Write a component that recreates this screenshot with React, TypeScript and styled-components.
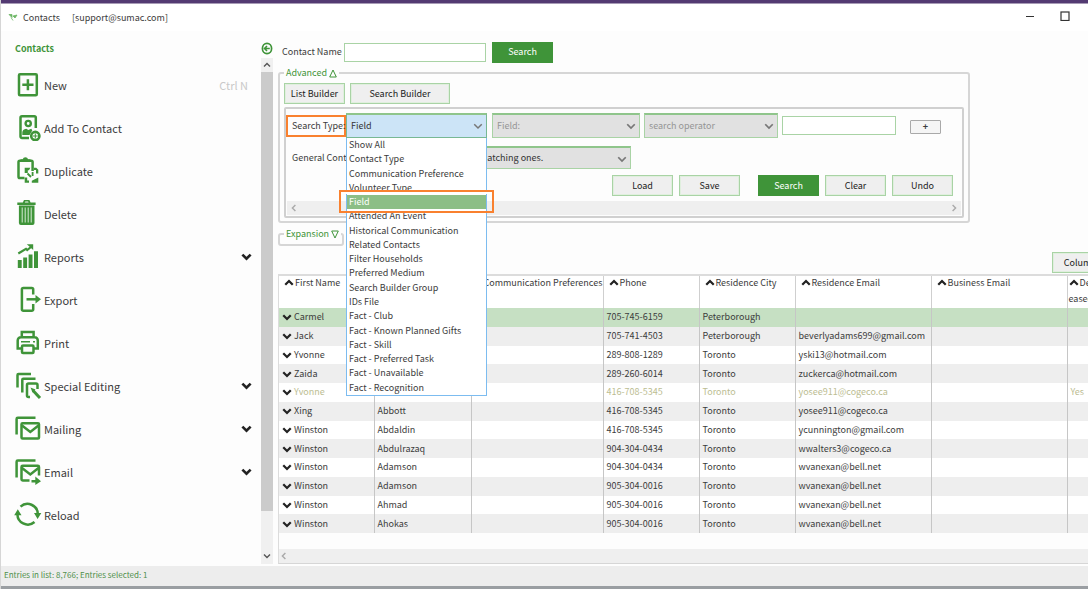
import React from "react";
import styled, { createGlobalStyle, css } from "styled-components";

const green = "#3f9439";
const paleGreen = "#a9d3a5";
const orange = "#f9812f";

const GlobalStyle = createGlobalStyle`
  *, *::before, *::after { box-sizing: border-box; }
  body { margin: 0; overflow: hidden; background: #fdfdfd; }
  body, button, input, select, table {
    font-family: "Noto Sans CJK SC", "Noto Sans", sans-serif;
    font-size: 9px;
    line-height: 14px;
    color: #3c3c3c;
  }
  button, input, select { margin: 0; padding: 0; border-radius: 0; }
`;

const Page = styled.div`
  min-height: 100vh;
  overflow: hidden;
`;
const AppWindow = styled.div`
  display: flex;
  flex-direction: column;
  width: calc(100% + 32px);
  min-height: 100vh;
  border-left: 1px solid #d6d6d6;
`;
const TopEdge = styled.div`
  height: 4px;
  background: #533a72;
  border-bottom: 1px solid #a79bb6;
`;
const TitleBar = styled.header`
  display: flex;
  align-items: center;
  height: 27px;
  padding: 0 3px 0 7px;
  background: #fff;
`;
const TitleName = styled.span`
  margin-left: 5px;
`;
const TitleUser = styled.span`
  margin-left: 12px;
  flex: 1;
`;
const WindowButton = styled.button`
  display: flex;
  align-items: center;
  justify-content: center;
  width: 35px;
  height: 24px;
  margin-bottom: 3px;
  border: 0;
  background: transparent;
`;
const Body = styled.div`
  display: flex;
  flex: 1;
`;
const Sidebar = styled.aside`
  display: flex;
  width: 272px;
  flex: none;
`;
const SideMain = styled.div`
  flex: 1;
`;
const SideTitle = styled.h2`
  margin: 0;
  padding: 11px 0 7px 14px;
  font-size: 9px;
  line-height: 14px;
  font-weight: 700;
  color: ${green};
`;
const Menu = styled.nav`
  display: flex;
  flex-direction: column;
`;
const MenuItem = styled.button`
  display: flex;
  align-items: center;
  height: 43px;
  padding: 0 9px 0 13px;
  border: 0;
  background: transparent;
  font-size: 11px;
  text-align: left;
`;
const MenuIcon = styled.svg`
  width: 28px;
  height: 28px;
  margin-bottom: 1px;
  flex: none;
`;
const MenuLabel = styled.span`
  flex: 1;
  margin-left: 2px;
`;
const Shortcut = styled.span`
  color: #c9c9c9;
  margin-right: 4px;
`;
const SideRail = styled.div`
  display: flex;
  flex-direction: column;
  align-items: center;
  width: 12px;
  padding: 11px 0 2px;
`;
const CollapseButton = styled.button`
  display: flex;
  border: 0;
  background: transparent;
`;
const VTrack = styled.div`
  display: flex;
  flex-direction: column;
  align-items: center;
  flex: 1;
  width: 12px;
  margin-top: 3px;
  padding: 3px 0 4px;
  background: #f0f0f0;
`;
const VThumb = styled.div`
  width: 12px;
  flex: 1;
  margin: 3px 0 41px;
  background: #cbcbcb;
`;
const Main = styled.main`
  display: flex;
  flex-direction: column;
  flex: 1;
  min-width: 0;
  padding: 11px 0 2px 5px;
`;
const SearchRow = styled.form`
  display: flex;
  align-items: center;
  height: 20px;
  padding-left: 4px;
`;
const TextBox = styled.input<{ $w: number }>`
  width: ${(p) => p.$w}px;
  height: 19px;
  border: 1px solid ${paleGreen};
  background: #fff;
`;
const Button = styled.button<{ $w?: number; $primary?: boolean }>`
  width: ${(p) => p.$w ?? 61}px;
  height: 21px;
  flex: none;
  border: 1px solid ${(p) => (p.$primary ? green : paleGreen)};
  outline: 1px solid ${(p) => (p.$primary ? "transparent" : "#e0efde")};
  outline-offset: -2px;
  background: ${(p) => (p.$primary ? green : "#efefef")};
  color: ${(p) => (p.$primary ? "#fff" : "#222")};
`;
const SearchGap = styled.div`
  width: 6px;
`;
const ContactLabel = styled.label`
  width: 62px;
`;
const Group = styled.fieldset`
  width: 692px;
  min-width: 0;
  margin: 4px 0 0;
  padding: 3px 4px;
  border: 2px solid #d6d6d6;
  border-radius: 3px;
`;
const SmallGroup = styled.fieldset`
  width: 66px;
  min-width: 0;
  height: 19px;
  margin: 4px 0 0;
  padding: 0;
  border: 2px solid #d6d6d6;
  border-radius: 3px;
`;
const Legend = styled.legend<{ $inset: number }>`
  margin-left: ${(p) => p.$inset}px;
  padding: 0 2px;
`;
const LegendButton = styled.button`
  display: flex;
  align-items: center;
  gap: 2px;
  border: 0;
  background: transparent;
  color: ${green};
  white-space: nowrap;
`;
const BuilderRow = styled.div`
  display: flex;
  gap: 5px;
`;
const Criteria = styled.div`
  margin-top: 3px;
  padding: 4px 0 1px;
  border: 2px solid #d0d0d0;
  border-radius: 2px;
`;
const CriteriaRow = styled.div`
  display: flex;
  align-items: center;
  height: 25px;
`;
const GeneralRow = styled.div`
  display: flex;
  align-items: center;
  height: 23px;
  margin-top: 8px;
`;
const TypeLabel = styled.label`
  width: 60px;
  height: 22px;
  padding-left: 4px;
  border: 2px solid ${orange};
  line-height: 18px;
  white-space: nowrap;
`;
const GeneralLabel = styled.label`
  width: 60px;
  padding-left: 6px;
  white-space: nowrap;
`;
const SelectWrap = styled.div<{ $w: number; $ml: number }>`
  position: relative;
  display: flex;
  align-items: center;
  width: ${(p) => p.$w}px;
  margin-left: ${(p) => p.$ml}px;
  flex: none;
`;
const Select = styled.select<{ $open?: boolean; $muted?: boolean; $indent?: number }>`
  appearance: none;
  width: 100%;
  height: ${(p) => (p.$indent ? 23 : 25)}px;
  padding-left: ${(p) => p.$indent ?? 4}px;
  border: 1px solid ${(p) => (p.$open ? "#78b894" : paleGreen)};
  border-top: 2px solid #8fc58b;
  background: ${(p) => (p.$open ? "#cce4f7" : "#e1e1e1")};
  color: ${(p) => (p.$muted ? "#959595" : "#333")};
  opacity: 1;
`;
const SelectArrow = styled.span`
  position: absolute;
  right: 4px;
  top: 8px;
  display: flex;
  pointer-events: none;
`;
const Options = styled.ul`
  position: absolute;
  z-index: 5;
  top: 100%;
  left: 0;
  display: grid;
  grid-auto-rows: 1fr;
  width: 141px;
  height: 258px;
  margin: 0;
  padding: 0;
  list-style: none;
  border: 1px solid #7cbcf0;
  border-top: 0;
  background: #fff;
  white-space: nowrap;
`;
const Option = styled.li<{ $selected: boolean }>`
  padding-left: 2px;
  min-height: 0;
  ${(p) =>
    p.$selected &&
    css`
      position: relative;
      background: #8cbe86;
      color: #fff;
      &::after {
        content: "";
        position: absolute;
        inset: -5px -8px -4px;
        border: 2px solid ${orange};
        box-shadow: inset 0 2px #fff;
      }
    `}
`;
const AddButton = styled.button`
  width: 31px;
  height: 14px;
  margin: 2px 0 0 14px;
  border: 1px solid #a9a9a9;
  border-radius: 1px;
  background: #f5f5f5;
  font-weight: 700;
  line-height: 10px;
`;
const ActionRow = styled.div`
  display: flex;
  justify-content: flex-end;
  gap: 6px;
  margin: 6px 9px 5px 0;
`;
const HTrack = styled.div`
  display: flex;
  align-items: center;
  justify-content: space-between;
  height: 14px;
  margin: 0 1px;
  padding: 0 3px;
  background: #efefef;
`;
const GridTrack = styled(HTrack)`
  margin: 0;
  padding: 0 0 0 1px;
`;
const ColumnsRow = styled.div`
  display: flex;
  justify-content: flex-end;
  padding: 6px 7px 1px 0;
`;
const Grid = styled.div`
  display: flex;
  flex-direction: column;
  flex: 1;
  border-left: 1px solid #dcdcdc;
  border-top: 2px solid #dcdcdc;
  border-bottom: 1px solid #d6d6d6;
`;
const TableArea = styled.div`
  flex: 1;
`;
const Table = styled.table`
  width: 100%;
  height: 257px;
  table-layout: fixed;
  border-collapse: collapse;
`;
const HeadCell = styled.th`
  height: 32px;
  padding: 0 0 0 5px;
  border-right: 1px solid #cfcfcf;
  background: #fff;
  font-weight: 400;
  text-align: left;
  vertical-align: top;
  white-space: nowrap;
  overflow: hidden;
  &:nth-child(3) { padding-left: 12px; }
  &:last-child { padding-left: 1px; }
`;
const Sort = styled.span`
  display: inline-flex;
  align-items: center;
  gap: 1px;
`;
const Row = styled.tr<{ $tone: "selected" | "even" | "odd"; $faded: boolean }>`
  background: ${(p) => ({ selected: "#c6e0c3", even: "#eeeeee", odd: "#ffffff" })[p.$tone]};
  color: ${(p) => (p.$faded ? "#bcbd92" : "#3c3c3c")};
`;
const Cell = styled.td`
  padding: 0 0 0 3px;
  border-right: 1px solid #c6c6c6;
  white-space: nowrap;
  overflow: hidden;
`;
const NameCell = styled.span`
  display: flex;
  align-items: center;
  gap: 2px;
`;
const StatusBar = styled.footer`
  height: 20px;
  padding: 2px 3px 0;
  background: #ededed;
  color: #4f8f4a;
  font-size: 8px;
`;
const BottomEdge = styled.div`
  height: 3px;
  background: #9a9ea2;
`;

type Dir = "up" | "down" | "left" | "right";
const turns: Record<Dir, number> = { down: 0, up: 180, left: 90, right: 270 };

function Chevron({ dir, color = "#777", weight = 1.4, size = 8 }: { dir: Dir; color?: string; weight?: number; size?: number }) {
  return (
    <svg width={size} height={size} viewBox="0 0 8 8" aria-hidden="true">
      <path d="M1 2.6 4 5.6 7 2.6" transform={`rotate(${turns[dir]} 4 4)`} fill="none" stroke={color} strokeWidth={weight} />
    </svg>
  );
}

const stroke = { fill: "none", stroke: green, strokeWidth: 2.5 };
const icons: Record<string, React.ReactNode> = {
  New: (
    <g {...stroke}>
      <rect x="5" y="4.3" width="17.8" height="21" rx="1" />
      <path d="M13.900 9.300v11M8.300 14.800h11.200" />
    </g>
  ),
  "Add To Contact": (
    <g>
      <path d="M21.800 15V4.800a1.500 1.500 0 0 0-1.500-1.500H8a1.500 1.500 0 0 0-1.500 1.500V23.500a1.500 1.500 0 0 0 1.500 1.500H15" {...stroke} />
      <circle cx="14.200" cy="10.500" r="2.600" {...stroke} strokeWidth="2.400" />
      <path d="M8.300 22v-2.500q0-3 4-3.800l2 1.300 3-1.300 1 1.800L15.500 22z" fill={green} />
      <circle cx="21.300" cy="23" r="4.100" fill="#fff" stroke={green} strokeWidth="2.600" />
      <path d="M21.300 20.500v5M18.800 23h5" {...stroke} strokeWidth="1" />
    </g>
  ),
  Duplicate: (
    <g>
      <path d="M10.500 22H5.800a1.300 1.300 0 0 1-1.300-1.300V6a1.300 1.300 0 0 1 1.300-1.300h11.500A1.300 1.300 0 0 1 18.600 6v9" {...stroke} />
      <path d="M6.500 6V3.300h2.200a2.800 2.800 0 0 1 5.400 0h2.400V6z" fill={green} />
      <path d="M10.700 17v-5.200h5.600L15 14.300h-1.200V17zM18.500 11.800h1.500v2.200h2v3.500h2.300v-3.700l-2-2zM10.700 21.500h2.500v3H15v2.300h-4.300zM24.300 21.500v5.300h-6.500v-2z" fill={green} />
      <path d="M13.500 17.500 17 21M18.600 16v4" {...stroke} strokeWidth="1.800" />
    </g>
  ),
  Delete: (
    <g fill={green}>
      <path d="M8.800 3.500 10 1h5.400l1.200 2.500h5v2.500H3.300V3.500zm2 0h3.800l-.5-1h-2.800z" />
      <path d="M4.900 6.600h15.600V24a2 2 0 0 1-2 2H6.900a2 2 0 0 1-2-2z" />
      <path d="M8.200 8.500v15M11.200 8.500v15M14.200 8.500v15M17.200 8.500v15" stroke="#d6ead4" strokeWidth="1" />
    </g>
  ),
  Reports: (
    <g fill={green}>
      <path d="M3.800 18h3.900v8H3.800zM9.200 15.500h3.900V26H9.200zM14.600 12.500h3.900V26h-3.900zM20 9.300h4V26h-4z" />
      <path d="M4.300 11.500 12 6.800l1.200 1.200L17 5" {...stroke} strokeWidth="2.200" />
      <path d="M12.800 2.200h6.400V8z" />
    </g>
  ),
  Export: (
    <g>
      <path d="M19.200 9.500V4.300a1.400 1.400 0 0 0-1.400-1.400H9.300a1.400 1.400 0 0 0-1.400 1.400v20.100a1.400 1.400 0 0 0 1.400 1.400h8.500a1.400 1.400 0 0 0 1.400-1.400V19" {...stroke} />
      <path d="M12.500 14.300H23" {...stroke} />
      <path d="M21.500 10 27 14.300 21.500 18.600z" fill={green} />
    </g>
  ),
  Print: (
    <g {...stroke}>
      <path d="M7.800 9V4h11.800v5M7.500 20.500H3.700v-8A3.200 3.200 0 0 1 6.900 9.300h13.700a3.200 3.200 0 0 1 3.200 3.200v8H20" />
      <rect x="8" y="17.500" width="11.500" height="7.500" rx="1" />
      <path d="M7 13.700h9M19 13.700h2" strokeWidth="1.600" />
    </g>
  ),
  "Special Editing": (
    <g {...stroke}>
      <path d="M3.500 16.500V4a1 1 0 0 1 1-1H17M8.300 21.500V8.700a1 1 0 0 1 1-1h12.200M16 26h-1.500a1.500 1.500 0 0 1-1.500-1.500V14a1.500 1.500 0 0 1 1.500-1.500h7.500a1.500 1.500 0 0 1 1.500 1.500V18" />
      <path d="M19 19.500 26 27" strokeWidth="3" />
      <path d="M16.500 16.500 21.500 18.500 18.500 21.500z" fill={green} strokeWidth="0" />
    </g>
  ),
  Mailing: (
    <g {...stroke}>
      <path d="M2.600 20.500V4.900a1.200 1.200 0 0 1 1.200-1.200H21.500" />
      <rect x="7.500" y="9.300" width="17.500" height="15.200" rx="1" />
      <path d="M8 11.500 16.300 18l8.200-6.500" />
    </g>
  ),
  Email: (
    <g>
      <path d="M2.600 20.500V4.700a1.200 1.200 0 0 1 1.200-1.200H21.500M15.500 23.500H8.700A1.200 1.200 0 0 1 7.500 22.300V10a1.200 1.200 0 0 1 1.200-1.200h15.100A1.200 1.200 0 0 1 25 10V18.500M8 11 16.300 17.500l8.200-6.500M17.500 24.300h5" {...stroke} />
      <path d="M21.300 19.600 27 24.300 21.300 28z" fill={green} />
    </g>
  ),
  Reload: (
    <g>
      <path d="M6.500 6.700A10.300 10.300 0 0 1 23.800 14M3.500 13.500A10.300 10.300 0 0 0 20.500 22" {...stroke} />
      <path d="M20 13h7.300l-3.700 6zM.2 15.200h7.300L3.800 9.200z" fill={green} />
    </g>
  ),
};

const menu: { label: string; shortcut?: string; more?: boolean }[] = [
  { label: "New", shortcut: "Ctrl N" },
  { label: "Add To Contact" },
  { label: "Duplicate" },
  { label: "Delete" },
  { label: "Reports", more: true },
  { label: "Export" },
  { label: "Print" },
  { label: "Special Editing", more: true },
  { label: "Mailing", more: true },
  { label: "Email", more: true },
  { label: "Reload" },
];

const searchTypes = [
  "Show All", "Contact Type", "Communication Preference", "Volunteer Type", "Field", "Attended An Event",
  "Historical Communication", "Related Contacts", "Filter Households", "Preferred Medium", "Search Builder Group",
  "IDs File", "Fact - Club", "Fact - Known Planned Gifts", "Fact - Skill", "Fact - Preferred Task",
  "Fact - Unavailable", "Fact - Recognition",
];

const columns = [
  { title: "First Name", width: 95 },
  { title: "", width: 97 },
  { title: "Communication Preferences", width: 132 },
  { title: "Phone", width: 96 },
  { title: "Residence City", width: 96 },
  { title: "Residence Email", width: 136 },
  { title: "Business Email", width: 136 },
  { title: "Dec", width: 0 },
];

const contacts = [
  ["Carmel", "", "705-745-6159", "Peterborough", "", ""],
  ["Jack", "", "705-741-4503", "Peterborough", "beverlyadams699@gmail.com", ""],
  ["Yvonne", "", "289-808-1289", "Toronto", "yski13@hotmail.com", ""],
  ["Zaida", "", "289-260-6014", "Toronto", "zuckerca@hotmail.com", ""],
  ["Yvonne", "", "416-708-5345", "Toronto", "yosee911@cogeco.ca", "Yes"],
  ["Xing", "Abbott", "416-708-5345", "Toronto", "yosee911@cogeco.ca", ""],
  ["Winston", "Abdaldin", "416-708-5345", "Toronto", "ycunnington@gmail.com", ""],
  ["Winston", "Abdulrazaq", "904-304-0434", "Toronto", "wwalters3@cogeco.ca", ""],
  ["Winston", "Adamson", "904-304-0434", "Toronto", "wvanexan@bell.net", ""],
  ["Winston", "Adamson", "905-304-0016", "Toronto", "wvanexan@bell.net", ""],
  ["Winston", "Ahmad", "905-304-0016", "Toronto", "wvanexan@bell.net", ""],
  ["Winston", "Ahokas", "905-304-0016", "Toronto", "wvanexan@bell.net", ""],
];

function Triangle({ up }: { up?: boolean }) {
  return (
    <svg width="8" height="9" viewBox="0 0 8 9" aria-hidden="true">
      <path d={up ? "M4 1 7.300 8H.7z" : "M4 8 7.300 1H.7z"} fill="none" stroke={green} />
    </svg>
  );
}

export default function App() {
  return (
    <Page>
      <GlobalStyle />
      <AppWindow>
        <TopEdge />
        <TitleBar>
          <svg width="10" height="10" viewBox="0 0 10 10" aria-hidden="true">
            <path d="M1 1.500h3v3zM5 3l4-1-2 3zM3 4.500l2 3" fill="#6cb665" stroke="#6cb665" strokeWidth=".8" />
          </svg>
          <TitleName>Contacts</TitleName>
          <TitleUser>[support@sumac.com]</TitleUser>
          <WindowButton aria-label="Minimize">
            <svg width="10" height="10"><path d="M1 5.500h8" stroke="#333" /></svg>
          </WindowButton>
          <WindowButton aria-label="Maximize">
            <svg width="10" height="10"><rect x="1" y="1" width="8" height="8.500" fill="none" stroke="#333" strokeWidth="1.200" /></svg>
          </WindowButton>
          <WindowButton aria-label="Close">
            <svg width="10" height="10"><path d="M1 1l8 8M9 1 1 9" stroke="#333" /></svg>
          </WindowButton>
        </TitleBar>
        <Body>
          <Sidebar>
            <SideMain>
              <SideTitle>Contacts</SideTitle>
              <Menu>
                {menu.map((m) => (
                  <MenuItem key={m.label}>
                    <MenuIcon viewBox="0 0 28 28" aria-hidden="true">{icons[m.label]}</MenuIcon>
                    <MenuLabel>{m.label}</MenuLabel>
                    {m.shortcut && <Shortcut>{m.shortcut}</Shortcut>}
                    {m.more && <Chevron dir="down" color="#222" weight={1.9} size={11} />}
                  </MenuItem>
                ))}
              </Menu>
            </SideMain>
            <SideRail>
              <CollapseButton aria-label="Collapse menu">
                <svg width="12" height="13" viewBox="0 0 12 13">
                  <ellipse cx="6" cy="6.500" rx="4.600" ry="5.200" fill="none" stroke={green} strokeWidth="1.700" />
                  <path d="M8.800 6.500H4M6 4 3.500 6.500 6 9" fill="none" stroke={green} strokeWidth="1.600" />
                </svg>
              </CollapseButton>
              <VTrack>
                <Chevron dir="up" color="#555" />
                <VThumb />
                <Chevron dir="down" color="#555" />
              </VTrack>
            </SideRail>
          </Sidebar>
          <Main>
            <SearchRow onSubmit={(e) => e.preventDefault()}>
              <ContactLabel htmlFor="name">Contact Name</ContactLabel>
              <TextBox id="name" $w={142} />
              <SearchGap />
              <Button $primary>Search</Button>
            </SearchRow>
            <Group>
              <Legend $inset={0}>
                <LegendButton>Advanced <Triangle up /></LegendButton>
              </Legend>
              <BuilderRow>
                <Button>List Builder</Button>
                <Button $w={100}>Search Builder</Button>
              </BuilderRow>
              <Criteria>
                <CriteriaRow>
                  <TypeLabel htmlFor="type">Search Type:</TypeLabel>
                  <SelectWrap $w={141} $ml={0}>
                    <Select id="type" $open><option>Field</option></Select>
                    <SelectArrow><Chevron dir="down" weight={1.2} size={10} /></SelectArrow>
                    <Options role="listbox" aria-label="Search type">
                      {searchTypes.map((t) => (
                        <Option key={t} role="option" aria-selected={t === "Field"} $selected={t === "Field"}>{t}</Option>
                      ))}
                    </Options>
                  </SelectWrap>
                  <SelectWrap $w={148} $ml={5}>
                    <Select aria-label="Field" $muted disabled><option>Field:</option></Select>
                    <SelectArrow><Chevron dir="down" size={10} /></SelectArrow>
                  </SelectWrap>
                  <SelectWrap $w={134} $ml={4}>
                    <Select aria-label="Search operator" $muted disabled><option>search operator</option></Select>
                    <SelectArrow><Chevron dir="down" size={10} /></SelectArrow>
                  </SelectWrap>
                  <SelectWrap $w={114} $ml={4}>
                    <TextBox aria-label="Value" $w={114} />
                  </SelectWrap>
                  <AddButton>+</AddButton>
                </CriteriaRow>
                <GeneralRow>
                  <GeneralLabel htmlFor="general">General Contr</GeneralLabel>
                  <SelectWrap $w={285} $ml={0}>
                    <Select id="general" $indent={132}><option>matching ones.</option></Select>
                    <SelectArrow><Chevron dir="down" size={10} /></SelectArrow>
                  </SelectWrap>
                </GeneralRow>
                <ActionRow>
                  <Button>Load</Button>
                  <Button>Save</Button>
                  <SearchGap />
                  <Button $primary>Search</Button>
                  <Button>Clear</Button>
                  <Button>Undo</Button>
                </ActionRow>
                <HTrack>
                  <Chevron dir="left" color="#aaa" />
                  <Chevron dir="right" color="#aaa" />
                </HTrack>
              </Criteria>
            </Group>
            <SmallGroup>
              <Legend $inset={4}>
                <LegendButton>Expansion <Triangle /></LegendButton>
              </Legend>
            </SmallGroup>
            <ColumnsRow>
              <Button>Columns</Button>
            </ColumnsRow>
            <Grid>
              <TableArea>
                <Table>
                  <colgroup>
                    {columns.map((c) => <col key={c.title} width={c.width || undefined} />)}
                  </colgroup>
                  <thead>
                    <tr>
                      {columns.map((c) => (
                        <HeadCell key={c.title} scope="col">
                          {c.title && (
                            <Sort>
                              {c.title !== "Communication Preferences" && <Chevron dir="up" color="#222" weight={1.8} size={10} />}
                              {c.title}
                            </Sort>
                          )}
                          {c.title === "Dec" && <div>eased</div>}
                        </HeadCell>
                      ))}
                    </tr>
                  </thead>
                  <tbody>
                    {contacts.map(([first, last, phone, city, email, deceased], i) => (
                      <Row key={i} $tone={i === 0 ? "selected" : i % 2 ? "even" : "odd"} $faded={deceased === "Yes"}>
                        <Cell><NameCell><Chevron dir="down" color="#222" weight={1.8} size={10} />{first}</NameCell></Cell>
                        <Cell>{last}</Cell>
                        <Cell />
                        <Cell>{phone}</Cell>
                        <Cell>{city}</Cell>
                        <Cell>{email}</Cell>
                        <Cell />
                        <Cell>{deceased}</Cell>
                      </Row>
                    ))}
                  </tbody>
                </Table>
              </TableArea>
              <GridTrack>
                <Chevron dir="left" color="#aaa" />
              </GridTrack>
            </Grid>
          </Main>
        </Body>
        <StatusBar>Entries in list: 8,766; Entries selected: 1</StatusBar>
        <BottomEdge />
      </AppWindow>
    </Page>
  );
}
